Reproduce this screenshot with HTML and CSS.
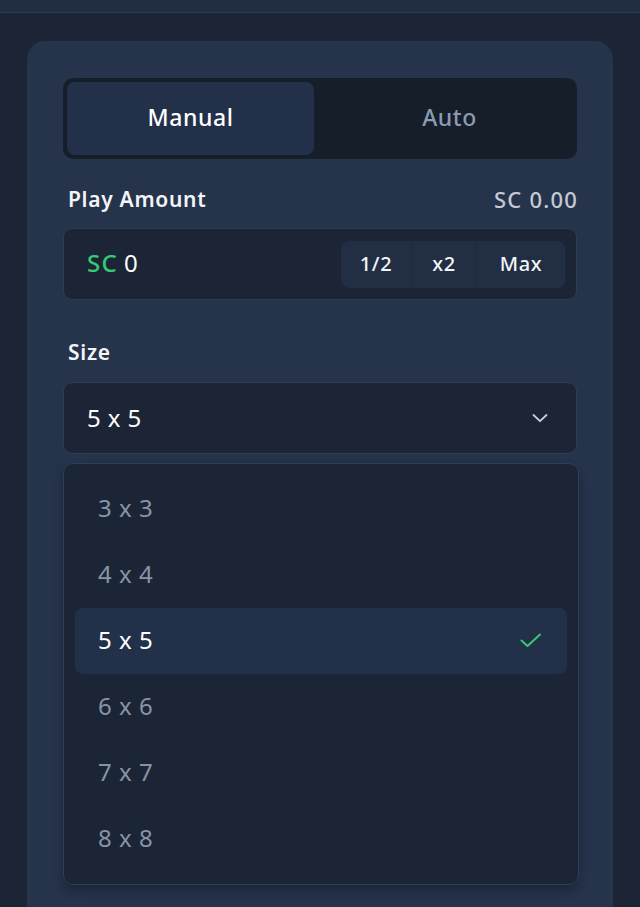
FILE: index.html
```html
<!DOCTYPE html>
<html>
<head>
<meta charset="utf-8">
<link rel="stylesheet" href="styles.css">
</head>
<body>
<div class="topbar"></div>
<div class="panel">
  <div class="tabs">
    <div class="tab active">Manual</div>
    <div class="tab">Auto</div>
  </div>
  <div class="label-row amount-label">
    <span class="label">Play Amount</span>
    <span class="balance">SC 0.00</span>
  </div>
  <div class="amount-input">
    <div class="amount-value"><span class="cur">SC</span> 0</div>
    <div class="quick">
      <div class="qbtn half">1/2</div>
      <div class="qbtn dbl">x2</div>
      <div class="qbtn max">Max</div>
    </div>
  </div>
  <div class="label-row size-label">
    <span class="label">Size</span>
  </div>
  <div class="select">
    <span class="select-value">5 x 5</span>
    <svg class="chev" width="20" height="20" viewBox="0 0 20 20"><path d="M3.5 7 L10 13.2 L16.5 7" fill="none" stroke="#c9d0da" stroke-width="1.8" stroke-linecap="round" stroke-linejoin="round"/></svg>
  </div>
  <div class="menu">
    <div class="opt">3 x 3</div>
    <div class="opt">4 x 4</div>
    <div class="opt selected">5 x 5
      <svg class="check" width="24" height="24" viewBox="0 0 24 24"><path d="M2.5 12.5 L8.5 18 L21 6.5" fill="none" stroke="#36c972" stroke-width="2" stroke-linecap="round" stroke-linejoin="round"/></svg>
    </div>
    <div class="opt">6 x 6</div>
    <div class="opt">7 x 7</div>
    <div class="opt">8 x 8</div>
  </div>
</div>
</body>
</html>
```
FILE: styles.css
```css
html, body {
  margin: 0;
  padding: 0;
  background: #1b2536;
  font-family: "Noto Sans", Roboto, sans-serif;
  color: #ffffff;
}
.topbar {
  height: 12px;
  background: #212d41;
  border-bottom: 1px solid #2a3952;
}
.panel {
  margin: 28px 27px 0 27px;
  background: #25334b;
  border-radius: 18px 18px 0 0;
  padding: 37px 36px 30px 36px;
  height: 900px;
  box-sizing: border-box;
}
.tabs {
  display: flex;
  gap: 12px;
  height: 81px;
  box-sizing: border-box;
  padding: 4px;
  background: #151e29;
  border-radius: 10px;
}
.tab {
  flex: 1;
  display: flex;
  align-items: center;
  justify-content: center;
  font-size: 23px;
  font-weight: 500;
  color: #8c9bb2;
  border-radius: 8px;
  letter-spacing: 0.6px;
  padding-bottom: 3px;
  box-sizing: border-box;
}
.tab.active {
  background: #22304a;
  color: #ffffff;
}
.label-row {
  display: flex;
  justify-content: space-between;
  align-items: center;
  padding: 0 0 0 5px;
}
.amount-label {
  margin-top: 25px;
  height: 30px;
  margin-bottom: 14px;
}
.size-label {
  margin-top: 37px;
  height: 30px;
  margin-bottom: 15px;
}
.label {
  font-size: 21px;
  font-weight: 600;
  color: #f3f5f8;
  letter-spacing: 0.7px;
}
.balance {
  font-size: 22px;
  font-weight: 500;
  color: #c3cad5;
  letter-spacing: 1.2px;
  margin-right: -1px;
}
.amount-input {
  display: flex;
  align-items: center;
  justify-content: space-between;
  height: 72px;
  box-sizing: border-box;
  border: 1px solid #2e3d56;
  background: #1b2536;
  border-radius: 9px;
  padding: 0 11px 0 23px;
}
.amount-value {
  font-size: 24px;
  color: #ffffff;
  padding-bottom: 3px;
}
.cur {
  color: #35c971;
  font-weight: 500;
  letter-spacing: 1.2px;
}
.quick {
  display: flex;
  height: 47px;
  background: #222e43;
  border-radius: 8px;
  overflow: hidden;
}
.qbtn {
  display: flex;
  align-items: center;
  justify-content: center;
  font-size: 20px;
  font-weight: 500;
  color: #f3f5f8;
  letter-spacing: 0.6px;
  padding-bottom: 2px;
  box-sizing: border-box;
}
.qbtn.half { width: 71px; border-right: 1px solid #1e2a3c; }
.qbtn.dbl { width: 65px; border-right: 1px solid #1e2a3c; }
.qbtn.max { width: 88px; }
.select {
  display: flex;
  align-items: center;
  justify-content: space-between;
  height: 72px;
  box-sizing: border-box;
  border: 1px solid #2e3d56;
  background: #1b2536;
  border-radius: 9px;
  padding: 0 26px 0 23px;
}
.select-value {
  font-size: 24px;
  color: #ffffff;
  letter-spacing: 0.4px;
  padding-bottom: 2px;
}
.menu {
  margin-top: 9px;
  width: 516px;
  box-sizing: border-box;
  border: 1px solid #2e3d56;
  background: #1b2536;
  border-radius: 10px;
  padding: 12px 11px;
  box-shadow: 0 6px 10px rgba(10, 16, 26, 0.35);
}
.opt {
  height: 66px;
  display: flex;
  align-items: center;
  justify-content: space-between;
  padding: 0 24px 3px 23px;
  box-sizing: border-box;
  font-size: 24px;
  color: #8794a8;
  border-radius: 8px;
  letter-spacing: 0.5px;
}
.opt.selected {
  background: #22304a;
  color: #ffffff;
}
.check {
  display: block;
}
```
